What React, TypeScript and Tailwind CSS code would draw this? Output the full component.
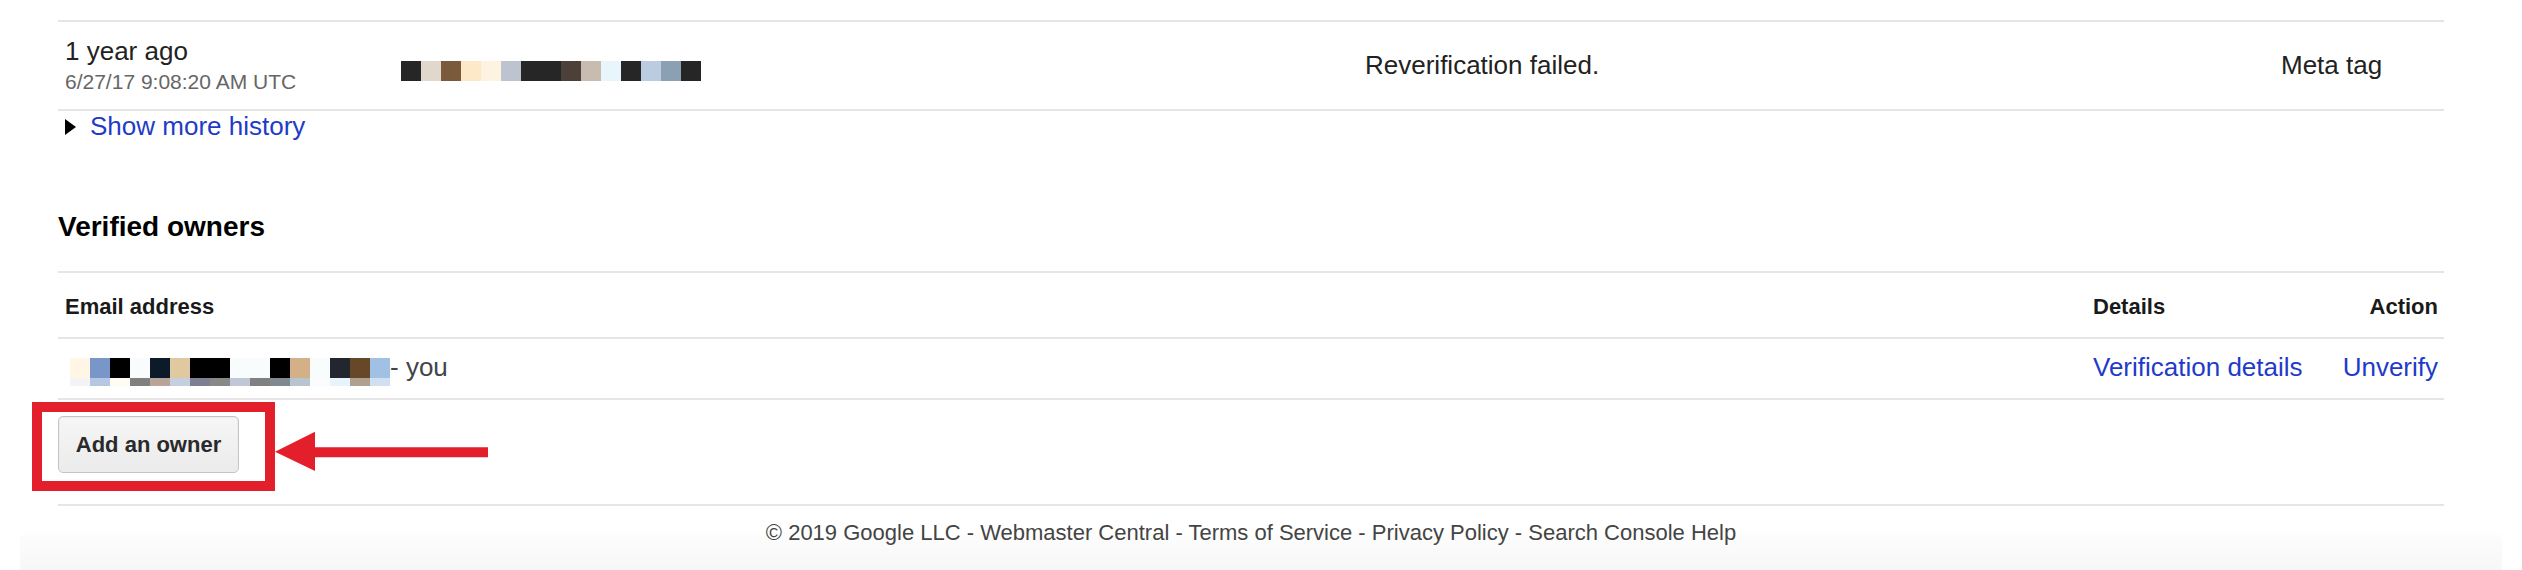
import { ReactNode } from 'react'

const HISTORY_USER = ['#262626', '#e0d8cc', '#7a5a3a', '#fde8c8', '#fdf3e0', '#bcc4d0', '#262626', '#262626', '#4d4038', '#c8bcb0', '#e8f6fc', '#262626', '#bccce0', '#8ca0b4', '#262626']

const EMAIL_TOP = ['#fff6e6', '#7896c8', '#000000', '#f8fcfc', '#0c1a2a', '#e0c8a0', '#000000', '#000000', '#f8fcfc', '#f8fcfc', '#000000', '#d4b088', '#f8fcfc', '#22262e', '#664828', '#a0c0e4']
const EMAIL_BOTTOM = ['#f4f4f4', '#b4c8e4', '#fffcf4', '#808080', '#b8a498', '#c4d0e0', '#7c8090', '#888888', '#c0c8d8', '#808080', '#808890', '#b8c4d0', '#fafcfe', '#e8f4fc', '#b0a090', '#d0e0f0']

function Pixels({ colors, tall }: { colors: string[]; tall: boolean }) {
  return (
    <div className="flex">
      {colors.map((c, i) => (
        <div key={i} className={tall ? 'h-[20px] w-[20px]' : 'h-[8px] w-[20px]'} style={{ backgroundColor: c }} />
      ))}
    </div>
  )
}

function Link({ children }: { children: ReactNode }) {
  return <a className="cursor-pointer text-[#1f3bc8]">{children}</a>
}

export default function App() {
  return (
    <div className="min-h-screen overflow-hidden bg-white font-['Liberation_Sans',Arial,sans-serif] text-[#222]">
      <div className="ml-[58px] w-[2386px] pt-[20px]">
        {/* verification history */}
        <div className="grid grid-cols-[336px_964px_916px_170px] border-y-2 border-[#e5e5e5] pb-[13px] pt-[12px]">
          <div className="pl-[7px]">
            <div className="text-[26px] leading-[34px]">1 year ago</div>
            <div className="text-[21px] leading-[28px] text-[#666]">6/27/17 9:08:20 AM UTC</div>
          </div>
          <div className="pl-[7px] pt-[27px]">
            <Pixels colors={HISTORY_USER} tall />
          </div>
          <div className="self-center pl-[7px] text-[26px] leading-[30px]">Reverification failed.</div>
          <div className="self-center pl-[7px] text-[26px] leading-[30px]">Meta tag</div>
        </div>

        <div className="flex h-[30px] items-center pl-[7px] text-[26px] leading-[30px]">
          <svg width="11" height="16" viewBox="0 0 11 16" className="mr-[14px] mt-[1px]">
            <path d="M0 0L11 8L0 16Z" fill="#000" />
          </svg>
          <Link>Show more history</Link>
        </div>

        {/* verified owners */}
        <h2 className="mt-[70px] text-[28px] font-bold leading-[32px] text-black">Verified owners</h2>

        <div className="mt-[28px] border-t-2 border-[#e5e5e5]">
          <div className="grid grid-cols-[2028px_250px_108px] border-b-2 border-[#e5e5e5] pb-[17px] pt-[21px] text-[22px] font-bold leading-[26px] text-[#1a1a1a]">
            <div className="pl-[7px]">Email address</div>
            <div className="pl-[7px]">Details</div>
            <div className="pr-[6px] text-right">Action</div>
          </div>

          <div className="grid grid-cols-[2028px_250px_108px] border-b-2 border-[#e5e5e5] pb-[16px] pt-[13px] text-[26px] leading-[30px]">
            <div className="flex h-[30px] items-start pl-[7px]">
              <div className="ml-[5px] mt-[6px]">
                <Pixels colors={EMAIL_TOP} tall />
                <Pixels colors={EMAIL_BOTTOM} tall={false} />
              </div>
              <span className="text-[#444]">- you</span>
            </div>
            <div className="pl-[7px]">
              <Link>Verification details</Link>
            </div>
            <div className="pr-[6px] text-right">
              <Link>Unverify</Link>
            </div>
          </div>

          <div className="relative border-b-2 border-[#e5e5e5] pb-[31px] pt-[16px]">
            <button
              type="button"
              className="h-[57px] w-[181px] rounded-[5px] border border-[#c4c4c4] bg-gradient-to-b from-[#f6f6f6] to-[#ebebeb] text-[22px] font-bold leading-[26px] text-[#2a2a2a] shadow-[inset_0_0_0_1px_#ececec]"
            >
              Add an owner
            </button>
            <div className="pointer-events-none absolute left-[-26px] top-[2px] h-[89px] w-[243px] border-[10px] border-[#e41f2c]" />
            <svg className="pointer-events-none absolute left-[217px] top-[31px]" width="214" height="41" viewBox="0 0 214 41">
              <path d="M0 20.7L40 0.7V16.3H213V26.3H40V40Z" fill="#e41f2c" />
            </svg>
          </div>
        </div>
      </div>

      <footer className="mx-[20px] rounded-t-[36px] bg-[linear-gradient(to_bottom,#ffffff_0px,#ffffff_26px,#fcfcfc_32px,#f6f6f6_70px)] pb-[30px] pt-[14px]">
        <div className="ml-[38px] w-[2386px] text-center text-[22px] leading-[26px] text-[#444]">
          © 2019 Google LLC - Webmaster Central - Terms of Service - Privacy Policy - Search Console Help
        </div>
      </footer>
    </div>
  )
}
